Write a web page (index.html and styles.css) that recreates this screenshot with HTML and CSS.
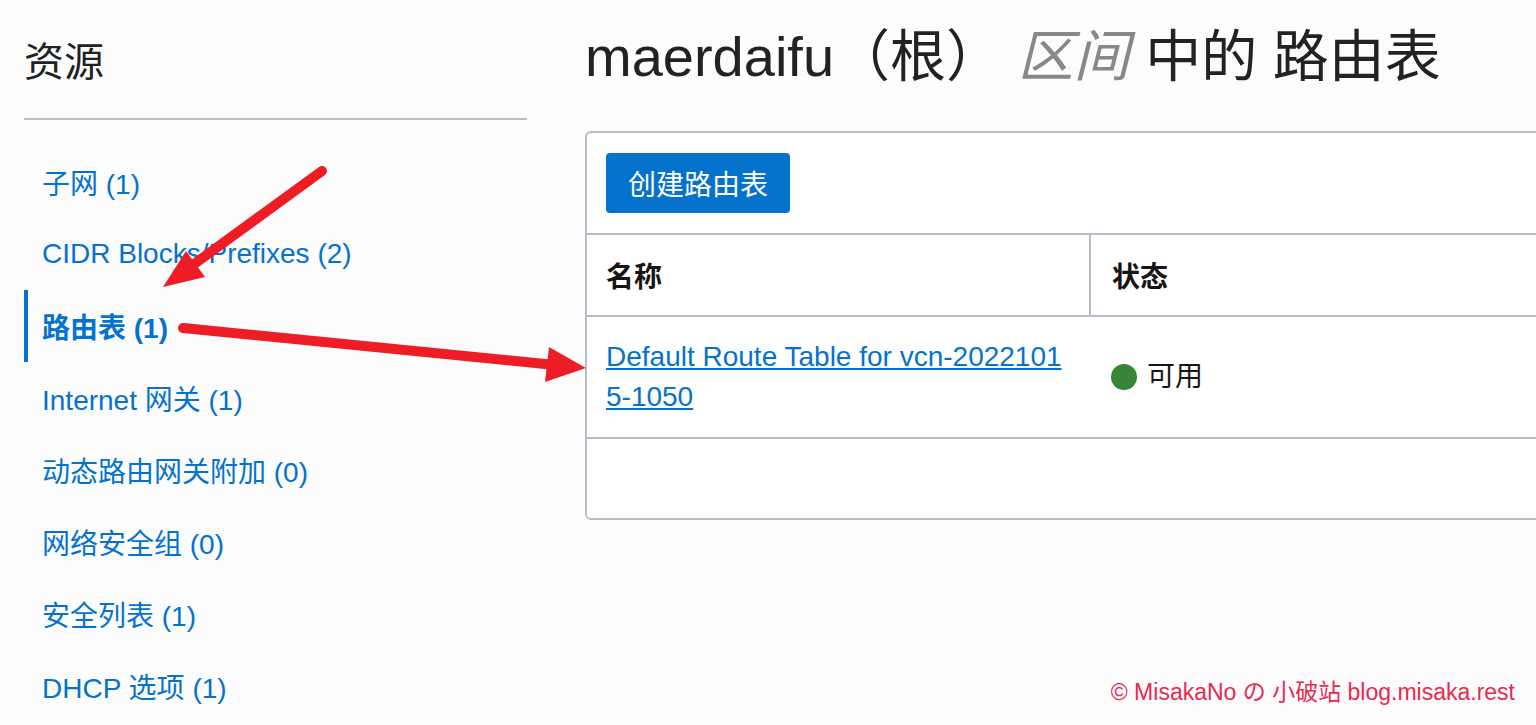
FILE: index.html
```html
<!DOCTYPE html>
<html lang="zh-CN">
<head>
<meta charset="utf-8">
<title>路由表</title>
<link rel="stylesheet" href="styles.css">
</head>
<body>
<div class="page">
  <aside class="sidebar">
    <h2 class="res-title">资源</h2>
    <div class="rule"></div>
    <ul class="nav">
      <li class="nav-item"><a href="#">子网 (1)</a></li>
      <li class="nav-item"><a href="#">CIDR Blocks/Prefixes (2)</a></li>
      <li class="nav-item active"><a href="#">路由表 (1)</a></li>
      <li class="nav-item"><a href="#">Internet 网关 (1)</a></li>
      <li class="nav-item"><a href="#">动态路由网关附加 (0)</a></li>
      <li class="nav-item"><a href="#">网络安全组 (0)</a></li>
      <li class="nav-item"><a href="#">安全列表 (1)</a></li>
      <li class="nav-item"><a href="#">DHCP 选项 (1)</a></li>
    </ul>
  </aside>
  <main class="main">
    <h1 class="page-title">maerdaifu（根） <em class="scope">区间</em> 中的 路由表</h1>
    <section class="panel">
      <div class="toolbar">
        <button class="btn-primary" type="button">创建路由表</button>
      </div>
      <div class="grid">
        <div class="th th-first">名称</div>
        <div class="th th-second">状态</div>
        <div class="td td-first"><a class="row-link" href="#">Default Route Table for vcn-20221015-1050</a></div>
        <div class="td td-second"><span class="dot"></span><span class="status-text">可用</span></div>
      </div>
      <div class="panel-footer"></div>
    </section>
  </main>
</div>
<svg class="arrows" width="1536" height="725" viewBox="0 0 1536 725" xmlns="http://www.w3.org/2000/svg">
  <line x1="322" y1="171" x2="186" y2="270" stroke="#ee1d25" stroke-width="10" stroke-linecap="round"/>
  <polygon points="163,287 205,277 186,251" fill="#ee1d25"/>
  <line x1="183" y1="328" x2="555" y2="365" stroke="#ee1d25" stroke-width="10" stroke-linecap="round"/>
  <polygon points="586,368 549,347 545,382" fill="#ee1d25"/>
</svg>
<div class="watermark">© MisakaNo の 小破站 blog.misaka.rest</div>
</body>
</html>
```

FILE: styles.css
```css
html, body {
  margin: 0;
  padding: 0;
}
body {
  background: #fcfcfc;
  font-family: "Liberation Sans", "Noto Sans CJK SC", sans-serif;
  color: #222222;
  width: 1536px;
  height: 725px;
  overflow: hidden;
  position: relative;
}
.page {
  display: flex;
  padding-left: 24px;
}
.sidebar {
  width: 503px;
  flex: none;
}
.res-title {
  margin: 38px 0 0 0;
  font-size: 40px;
  line-height: 48px;
  font-weight: normal;
  color: #222222;
}
.rule {
  margin-top: 32px;
  height: 2px;
  background: #b9bdc9;
}
.nav {
  list-style: none;
  margin: 26px 0 0 0;
  padding: 0;
}
.nav-item {
  height: 72px;
  display: flex;
  align-items: center;
  border-left: 4px solid transparent;
  padding-left: 14px;
  font-size: 28px;
}
.nav-item a {
  color: #0572ce;
  text-decoration: none;
}
.nav-item.active {
  border-left-color: #0572ce;
  font-weight: bold;
}
.main {
  margin-left: 58px;
  flex: none;
  width: 1100px;
}
.page-title {
  margin: 25px 0 0 0;
  font-size: 56px;
  line-height: 64px;
  font-weight: normal;
  color: #222222;
  white-space: nowrap;
}
.scope {
  color: #888888;
  font-style: italic;
}
.panel {
  margin-top: 42px;
  border: 2px solid #b9bdc9;
  border-radius: 6px;
  background: #ffffff;
}
.toolbar {
  padding: 20px 19px;
  border-bottom: 2px solid #b9bdc9;
  display: flex;
}
.btn-primary {
  height: 60px;
  padding: 0 22px;
  border: none;
  border-radius: 4px;
  background: #0572ce;
  color: #ffffff;
  font-family: "Liberation Sans", "Noto Sans CJK SC", sans-serif;
  font-size: 28px;
}
.grid {
  display: grid;
  grid-template-columns: 502px 1fr;
}
.th {
  height: 80px;
  display: flex;
  align-items: center;
  font-size: 28px;
  font-weight: bold;
  color: #161513;
  border-bottom: 2px solid #b9bdc9;
}
.th-first {
  padding-left: 19px;
}
.th-second {
  border-left: 2px solid #b9bdc9;
  padding-left: 21px;
}
.td {
  height: 120px;
  border-bottom: 2px solid #b9bdc9;
  font-size: 28px;
  line-height: 40px;
  display: flex;
  align-items: center;
}
.td-first {
  padding: 0 20px 0 19px;
}
.td-second {
  padding-left: 22px;
  color: #161513;
}
.row-link {
  color: #0572ce;
  text-decoration: underline;
  word-break: break-all;
}
.dot {
  width: 26px;
  height: 26px;
  border-radius: 50%;
  background: #378539;
  margin-right: 10px;
  flex: none;
}
.panel-footer {
  height: 79px;
}
.arrows {
  position: absolute;
  left: 0;
  top: 0;
  pointer-events: none;
}
.watermark {
  position: absolute;
  right: 21px;
  bottom: 20px;
  font-size: 23px;
  line-height: 26px;
  color: #e52b50;
  white-space: nowrap;
}
```
